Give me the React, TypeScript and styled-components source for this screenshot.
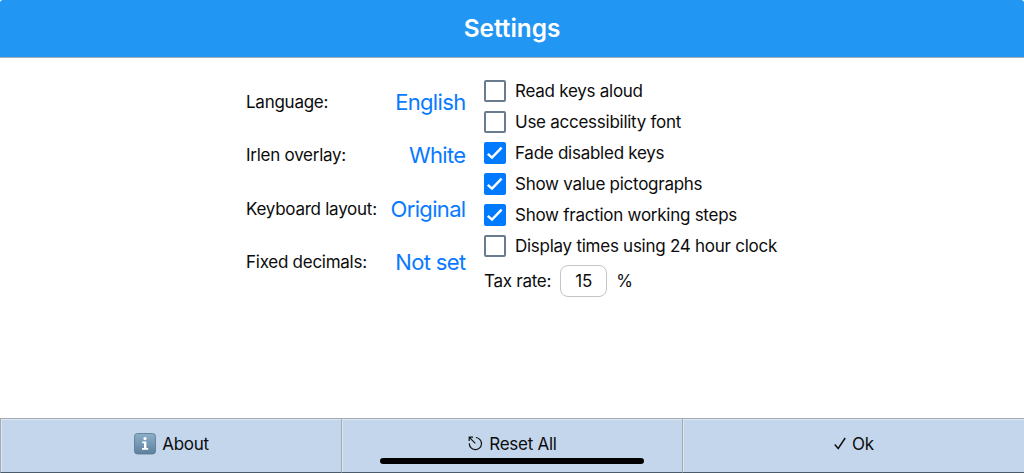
import styled, { createGlobalStyle } from 'styled-components';

const GlobalStyle = createGlobalStyle`
  * {
    box-sizing: border-box;
  }

  body {
    margin: 0;
    background: #fff;
    color: #0c0c0c;
    font-family: Inter, 'Liberation Sans', sans-serif;
    font-size: 17px;
  }
`;

const Page = styled.div`
  position: relative;
  display: flex;
  flex-direction: column;
  width: 100%;
  height: 473px;
  overflow: hidden;
`;

const Header = styled.header`
  display: flex;
  flex: none;
  align-items: center;
  justify-content: center;
  height: 58px;
  padding-bottom: 2px;
  background: #2196f3;
  border-bottom: 1px solid #a9b0b8;
  border-radius: 3px 3px 0 0;
`;

const Title = styled.h1`
  margin: 0;
  color: #fff;
  font-size: 24.4px;
  font-weight: 600;
  line-height: 54px;
`;

const Content = styled.main`
  display: flex;
  flex: 1;
  justify-content: center;
  gap: 18px;
  padding-top: 17px;
`;

const Choices = styled.div`
  width: 220px;
`;

const Choice = styled.div`
  display: flex;
  align-items: center;
  justify-content: space-between;
  height: 53.5px;
  white-space: nowrap;
`;

const Label = styled.span`
  letter-spacing: -0.26px;
  white-space: nowrap;
`;

const Value = styled.a`
  margin-right: 0.5px;
  color: #097aff;
  font-size: 22px;
  letter-spacing: -0.66px;
`;

const Options = styled.div`
  width: 294px;
`;

const Option = styled.label`
  display: flex;
  align-items: center;
  gap: 9px;
  height: 31px;
`;

const Box = styled.span<{ $checked: boolean }>`
  display: flex;
  flex: none;
  width: 22px;
  height: 22px;
  border: 2px solid ${({ $checked }) => ($checked ? '#007aff' : '#6b7b8f')};
  border-radius: 2px;
  background: ${({ $checked }) => ($checked ? '#007aff' : '#fff')};
`;

const TaxRow = styled.div`
  display: flex;
  align-items: center;
  gap: 9px;
  height: 40px;
`;

const TaxInput = styled.input`
  width: 47px;
  height: 32px;
  padding: 0;
  border: 1px solid #c4c4c4;
  border-radius: 8px;
  color: inherit;
  font: inherit;
  letter-spacing: -0.24px;
  text-align: center;
`;

const Footer = styled.footer`
  display: grid;
  flex: none;
  grid-template-columns: 341px 341px 1fr;
  height: 55px;
`;

const FooterButton = styled.button`
  display: flex;
  align-items: center;
  justify-content: center;
  gap: 6px;
  padding: 0 0 4px 1px;
  border: solid #a6a9ad;
  border-width: 1px 0 1px 1px;
  border-bottom-color: #4c5b6b;
  background: #c4d6ec;
  box-shadow: inset 1px 1px #dae7f5;
  color: #0c0c0c;
  font: inherit;
`;

const HomeIndicator = styled.div`
  position: absolute;
  bottom: 9px;
  left: 380px;
  width: 264px;
  height: 6px;
  border-radius: 3px;
  background: #000;
`;

const choices = [
  { label: 'Language:', value: 'English' },
  { label: 'Irlen overlay:', value: 'White' },
  { label: 'Keyboard layout:', value: 'Original' },
  { label: 'Fixed decimals:', value: 'Not set' },
];

const options = [
  { label: 'Read keys aloud', checked: false },
  { label: 'Use accessibility font', checked: false },
  { label: 'Fade disabled keys', checked: true },
  { label: 'Show value pictographs', checked: true },
  { label: 'Show fraction working steps', checked: true },
  { label: 'Display times using 24 hour clock', checked: false },
];

function Tick() {
  return (
    <svg width="18" height="18" viewBox="0 0 18 18" fill="none">
      <path d="M1.8 9.8 6 13.6 15.6 3.6" stroke="#fff" strokeWidth="2.4" />
    </svg>
  );
}

function InfoIcon() {
  return (
    <svg width="22" height="22" viewBox="0 0 22 22">
      <defs>
        <linearGradient id="info" x1="0" y1="0" x2="0" y2="1">
          <stop offset="0" stopColor="#8db0c9" />
          <stop offset="1" stopColor="#5d809e" />
        </linearGradient>
      </defs>
      <rect x=".5" y=".5" width="21" height="20.5" rx="3" fill="url(#info)" stroke="#58768f" strokeWidth=".8" />
      <circle cx="11" cy="5.6" r="1.6" fill="#fff" />
      <path d="M8.2 8.6h4.2v6.4h1.8v1.8H8V15h2v-4.7H8.2z" fill="#fff" />
    </svg>
  );
}

function ResetIcon() {
  return (
    <svg width="15" height="15" viewBox="0 0 15 15" fill="none" stroke="#111" strokeWidth="1.2">
      <path d="M7.8 1.5A6.1 6.1 0 1 1 1.3 7.2" />
      <path d="M7.3 7.3 1.4 1.4M1.2 5V1.2H5" />
    </svg>
  );
}

function OkIcon() {
  return (
    <svg width="12" height="13" viewBox="0 0 12 13" fill="none" stroke="#111" strokeWidth="1.5">
      <path d="M.8 7.5 4.2 11.5 11.2 1" />
    </svg>
  );
}

export default function App() {
  return (
    <Page>
      <GlobalStyle />
      <Header>
        <Title>Settings</Title>
      </Header>
      <Content>
        <Choices>
          {choices.map(({ label, value }) => (
            <Choice key={label}>
              <Label>{label}</Label>
              <Value>{value}</Value>
            </Choice>
          ))}
        </Choices>
        <Options>
          {options.map(({ label, checked }) => (
            <Option key={label}>
              <Box $checked={checked}>{checked && <Tick />}</Box>
              <Label>{label}</Label>
            </Option>
          ))}
          <TaxRow>
            <Label>Tax rate:</Label>
            <TaxInput defaultValue="15" />
            <Label>%</Label>
          </TaxRow>
        </Options>
      </Content>
      <Footer>
        <FooterButton type="button">
          <InfoIcon />
          <Label>About</Label>
        </FooterButton>
        <FooterButton type="button">
          <ResetIcon />
          <Label>Reset All</Label>
        </FooterButton>
        <FooterButton type="button">
          <OkIcon />
          <Label>Ok</Label>
        </FooterButton>
      </Footer>
      <HomeIndicator />
    </Page>
  );
}
